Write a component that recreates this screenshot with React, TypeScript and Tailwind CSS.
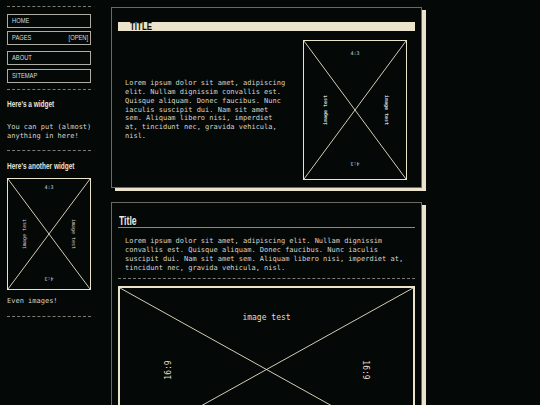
const cream = '#ebe3cb'

type PlaceholderProps = {
  className: string
  border?: string
  children?: React.ReactNode
}

function Placeholder({ className, border = 'border', children }: PlaceholderProps) {
  return (
    <div className={`relative ${border} border-[#ebe3cb] ${className}`}>
      <svg className="absolute inset-0 h-full w-full" preserveAspectRatio="none" viewBox="0 0 100 100">
        <line x1="0" y1="0" x2="100" y2="100" stroke={cream} strokeWidth="0.9" vectorEffect="non-scaling-stroke" />
        <line x1="100" y1="0" x2="0" y2="100" stroke={cream} strokeWidth="0.9" vectorEffect="non-scaling-stroke" />
      </svg>
      {children}
    </div>
  )
}

const mono = "font-['DejaVu_Sans_Mono','Liberation_Mono',monospace]"
const narrow = "font-['Liberation_Sans','Arial',sans-serif]"

// no condensed face is installed, so squeeze the glyphs horizontally
function Narrow({ children, right = false }: { children: React.ReactNode; right?: boolean }) {
  return (
    <span className={`inline-block scale-x-[0.72] whitespace-nowrap ${right ? 'origin-right' : 'origin-left'}`}>{children}</span>
  )
}

function NavItem({ label, extra, className = '' }: { label: string; extra?: string; className?: string }) {
  return (
    <div className={`flex h-[14px] items-center justify-between border border-[#aeaca4] pl-[4px] pr-[2px] text-[8px] leading-none text-[#dedcd4] ${narrow} ${className}`}>
      <Narrow>{label}</Narrow>
      {extra && <Narrow right>{extra}</Narrow>}
    </div>
  )
}

function Dashed({ className = '' }: { className?: string }) {
  return <div className={`border-t border-dashed border-[#7d7b74] ${className}`} />
}

export default function App() {
  return (
    <div className="flex min-h-screen items-start gap-[20px] overflow-hidden bg-[#040807] pl-[7px] text-[#d6d5ce]">
      <aside className="mt-[6px] flex w-[84px] shrink-0 flex-col">
        <Dashed />
        <NavItem label="HOME" className="mt-[7px]" />
        <NavItem label="PAGES" extra="[OPEN]" className="mt-[3px]" />
        <NavItem label="ABOUT" className="mt-[6px]" />
        <NavItem label="SITEMAP" className="mt-[4px]" />
        <Dashed className="mt-[6px]" />
        <h3 className={`mt-[9px] text-[9px] font-bold leading-[10px] text-[#e6e4dc] ${narrow}`}>
          <Narrow>Here's a widget</Narrow>
        </h3>
        <p className={`mt-[14px] whitespace-nowrap text-[7px] leading-[9px] ${mono}`}>
          You can put (almost)
          <br />
          anything in here!
        </p>
        <Dashed className="mt-[9px]" />
        <h3 className={`mt-[10px] text-[9px] font-bold leading-[10px] text-[#e6e4dc] ${narrow}`}>
          <Narrow>Here's another widget</Narrow>
        </h3>
        <Placeholder className="mt-[7px] h-[112px] w-[84px]">
          <span className={`absolute left-1/2 top-[6px] -translate-x-1/2 text-[5px] leading-none ${mono}`}>4:3</span>
          <span className={`absolute left-[16px] top-1/2 -translate-x-1/2 -translate-y-1/2 -rotate-90 whitespace-nowrap text-[5px] leading-none ${mono}`}>image test</span>
          <span className={`absolute left-[65px] top-1/2 -translate-x-1/2 -translate-y-1/2 rotate-90 whitespace-nowrap text-[5px] leading-none ${mono}`}>image test</span>
          <span className={`absolute bottom-[8px] left-1/2 -translate-x-1/2 rotate-180 text-[5px] leading-none ${mono}`}>4:3</span>
        </Placeholder>
        <p className={`mt-[7px] text-[7px] leading-[9px] ${mono}`}>Even images!</p>
        <Dashed className="mt-[10px]" />
      </aside>

      <main className="mt-[7px] flex w-[311px] shrink-0 flex-col gap-[14px]">
        <section className="border border-[#6b6a64] px-[6px] pb-[7px] pt-[14px] shadow-[4px_3px_0_#ebe3cb]">
          <div className={`h-[9px] bg-[#ebe3cb] pl-[12px] text-[11px] font-bold leading-[9px] text-[#0a0a08] ${narrow}`}>
            <Narrow>TITLE</Narrow>
          </div>
          <div className="mt-[9px] flex items-center">
            <p className={`ml-[7px] w-[161px] text-[7px] leading-[8.8px] ${mono}`}>
              Lorem ipsum dolor sit amet, adipiscing elit. Nullam dignissim convallis est. Quisque aliquam. Donec faucibus. Nunc iaculis suscipit dui. Nam sit amet sem. Aliquam libero nisi, imperdiet at, tincidunt nec, gravida vehicula, nisl.
            </p>
            <Placeholder className="ml-auto mr-[8px] h-[140px] w-[104px] shrink-0">
              <span className={`absolute left-1/2 top-[10px] -translate-x-1/2 text-[5px] leading-none ${mono}`}>4:3</span>
              <span className={`absolute left-[21px] top-1/2 -translate-x-1/2 -translate-y-1/2 -rotate-90 whitespace-nowrap text-[5px] font-bold leading-none ${mono}`}>image test</span>
              <span className={`absolute left-[82px] top-1/2 -translate-x-1/2 -translate-y-1/2 rotate-90 whitespace-nowrap text-[5px] font-bold leading-none ${mono}`}>image test</span>
              <span className={`absolute bottom-[13px] left-1/2 -translate-x-1/2 rotate-180 text-[5px] leading-none ${mono}`}>4:3</span>
            </Placeholder>
          </div>
        </section>

        <section className="border border-[#6b6a64] px-[6px] pb-[8px] pt-[12px] shadow-[4px_3px_0_#ebe3cb]">
          <h2 className={`border-b border-[#8a8880] pl-[1px] text-[12px] font-bold leading-[12px] text-[#ece9e0] ${narrow}`}>
            <Narrow>Title</Narrow>
          </h2>
          <p className={`ml-[7px] mt-[9px] w-[282px] text-[7px] leading-[9px] ${mono}`}>
            Lorem ipsum dolor sit amet, adipiscing elit. Nullam dignissim convallis est. Quisque aliquam. Donec faucibus. Nunc iaculis suscipit dui. Nam sit amet sem. Aliquam libero nisi, imperdiet at, tincidunt nec, gravida vehicula, nisl.
          </p>
          <Dashed className="mt-[5px]" />
          <Placeholder border="border-2" className="mt-[7px] h-[167px] w-full">
            <span className={`absolute left-1/2 top-[26px] -translate-x-1/2 whitespace-nowrap text-[8px] leading-none text-[#e4ddc6] ${mono}`}>image test</span>
            <span className={`absolute left-[49px] top-[82px] -translate-x-1/2 -translate-y-1/2 -rotate-90 text-[8px] leading-none text-[#e4ddc6] ${mono}`}>16:9</span>
            <span className={`absolute left-[245px] top-[82px] -translate-x-1/2 -translate-y-1/2 rotate-90 text-[8px] leading-none text-[#e4ddc6] ${mono}`}>16:9</span>
          </Placeholder>
        </section>
      </main>
    </div>
  )
}
